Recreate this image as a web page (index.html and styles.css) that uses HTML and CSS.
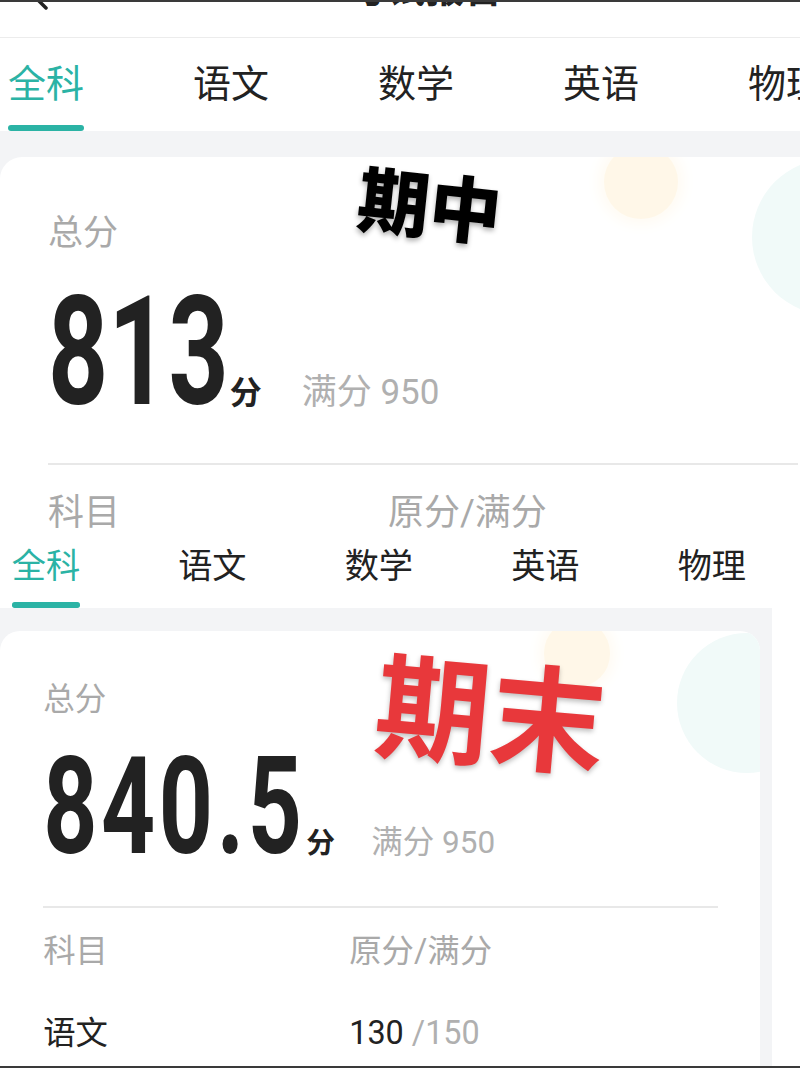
FILE: index.html
```html
<!DOCTYPE html>
<html lang="zh-CN">
<head>
  <meta charset="UTF-8" />
  <title>考试报告</title>
  <link rel="stylesheet" href="styles.css">
</head>
<body>
  <div class="page">

    <section class="shot mid">
      <div class="topbar">
        <svg class="back" width="30" height="40" viewBox="0 0 30 40"><polyline points="22,4 6,20 22,36" /></svg>
        <div class="title">考试报告</div>
      </div>
      <nav class="tabs">
        <span class="tab active">全科</span>
        <span class="tab">语文</span>
        <span class="tab">数学</span>
        <span class="tab">英语</span>
        <span class="tab">物理</span>
      </nav>
      <div class="band">
        <div class="card">
          <i class="dot sun"></i>
          <i class="dot mint"></i>
          <div class="label">总分</div>
          <div class="total">
            <span class="score">813</span>
            <span class="unit">分</span>
            <span class="full">满分 950</span>
          </div>
          <hr class="rule">
          <div class="row head"><span class="col">科目</span><span>原分/满分</span></div>
        </div>
      </div>
      <div class="stamp black">期中</div>
    </section>

    <section class="shot final">
      <nav class="tabs">
        <span class="tab active">全科</span>
        <span class="tab">语文</span>
        <span class="tab">数学</span>
        <span class="tab">英语</span>
        <span class="tab">物理</span>
      </nav>
      <div class="band">
        <div class="card">
          <i class="dot sun"></i>
          <i class="dot mint"></i>
          <div class="label">总分</div>
          <div class="total">
            <span class="score">840.5</span>
            <span class="unit">分</span>
            <span class="full">满分 950</span>
          </div>
          <hr class="rule">
          <div class="row head"><span class="col">科目</span><span>原分/满分</span></div>
          <div class="row"><span class="col">语文</span><span>130 <em>/150</em></span></div>
        </div>
      </div>
      <div class="stamp red">期末</div>
    </section>

  </div>
</body>
</html>
```

FILE: styles.css
```css
body {
  margin: 0;
  background: #fff;
  font-family: "Noto Sans CJK SC", sans-serif;
  color: #222;
  overflow: hidden;
}
.page {
  height: 1068px;
  box-sizing: border-box;
  border-top: 2px solid #3a3a3a;
  border-bottom: 2px solid #3a3a3a;
  overflow: hidden;
}
.shot {
  position: relative;
  width: 858px;
  display: flex;
  flex-direction: column;
  overflow: hidden;
  background: #fff;
}
.shot.mid { height: 531px; }
.shot.final {
  zoom: 0.9;
  height: 592px;
}

/* header, only its lower edge is left in the crop */
.topbar {
  height: 35px;
  display: flex;
  align-items: flex-start;
  border-bottom: 1px solid #ececec;
  overflow: hidden;
}
.back {
  margin: -30px 0 0 24px;
}
.back polyline {
  fill: none;
  stroke: #222;
  stroke-width: 3.5;
  stroke-linecap: round;
}
.title {
  margin: -35px 0 0 296px;
  font-size: 38px;
  line-height: 38px;
  font-weight: 700;
}

.tabs {
  height: 93px;
  box-sizing: border-box;
  display: flex;
  gap: 109px;
  padding: 24px 0 0 8px;
  flex-shrink: 0;
}
.final .tabs {
  margin-top: -10px;
  padding-left: 13px;
}
.tab {
  display: flex;
  flex-direction: column;
  font-size: 38px;
  line-height: 38px;
  color: #222;
  white-space: nowrap;
}
.tab.active { color: #2bb3a5; }
.tab.active::after {
  content: "";
  height: 6px;
  margin-top: 25px;
  border-radius: 3px;
  background: #2bb3a5;
}

.band {
  flex: 1;
  display: flex;
  flex-direction: column;
  background: #f3f4f6;
  padding-top: 26px;
}
.card {
  flex: 1;
  position: relative;
  overflow: hidden;
  margin-right: 14px;
  padding: 0 46px 0 48px;
  background: #fff;
  border-radius: 22px 22px 0 0;
}
.dot {
  position: absolute;
  border-radius: 50%;
}
.dot.sun {
  left: 604px;
  top: -12px;
  width: 74px;
  height: 74px;
  background: #fff7e8;
  box-shadow: 0 0 14px 6px #fffbf3;
}
.dot.mint {
  left: 752px;
  top: 2px;
  width: 156px;
  height: 156px;
  background: #f1faf9;
}

.label {
  position: relative;
  margin-top: 55px;
  font-size: 35px;
  line-height: 35px;
  color: #a9a9a9;
}
.total {
  position: relative;
  display: flex;
  align-items: baseline;
  margin-top: 68px;
}
.score {
  font-family: Roboto, "Liberation Sans", sans-serif;
  font-weight: 700;
  font-size: 105px;
  line-height: 107px;
  color: #222;
  transform: scaleY(1.44);
  transform-origin: 0 90px;
}
.final .score { letter-spacing: 4px; }
.unit {
  margin-left: 1px;
  font-size: 32px;
  line-height: 32px;
  font-weight: 700;
  color: #222;
}
.full {
  margin-left: 40px;
  font-family: Roboto, "Noto Sans CJK SC", sans-serif;
  font-size: 35px;
  line-height: 35px;
  color: #b0b0b0;
}
.rule {
  position: relative;
  margin: 41px 0 0;
  border: 0;
  height: 2px;
  background: #e8e8e8;
}
.row {
  position: relative;
  display: flex;
  margin-top: 55px;
  font-family: Roboto, "Noto Sans CJK SC", sans-serif;
  font-size: 36px;
  line-height: 36px;
  color: #222;
}
.row.head {
  margin-top: 30px;
  color: #a9a9a9;
}
.row .col { width: 340px; }
.row em {
  font-style: normal;
  color: #b0b0b0;
}

/* stickers pasted over the screenshots */
.stamp {
  position: absolute;
  white-space: nowrap;
  transform: rotate(6deg);
}
.stamp.black {
  left: 358px;
  top: 164px;
  font-size: 72px;
  line-height: 72px;
  font-weight: 900;
  color: #000;
  text-shadow: 0 3px 5px rgba(0, 0, 0, 0.3);
}
.stamp.red {
  left: 418px;
  top: 130px;
  font-size: 128px;
  line-height: 128px;
  font-weight: 700;
  color: #e8383b;
  text-shadow: 0 3px 6px rgba(0, 0, 0, 0.25);
  transform: rotate(5deg);
}
```
